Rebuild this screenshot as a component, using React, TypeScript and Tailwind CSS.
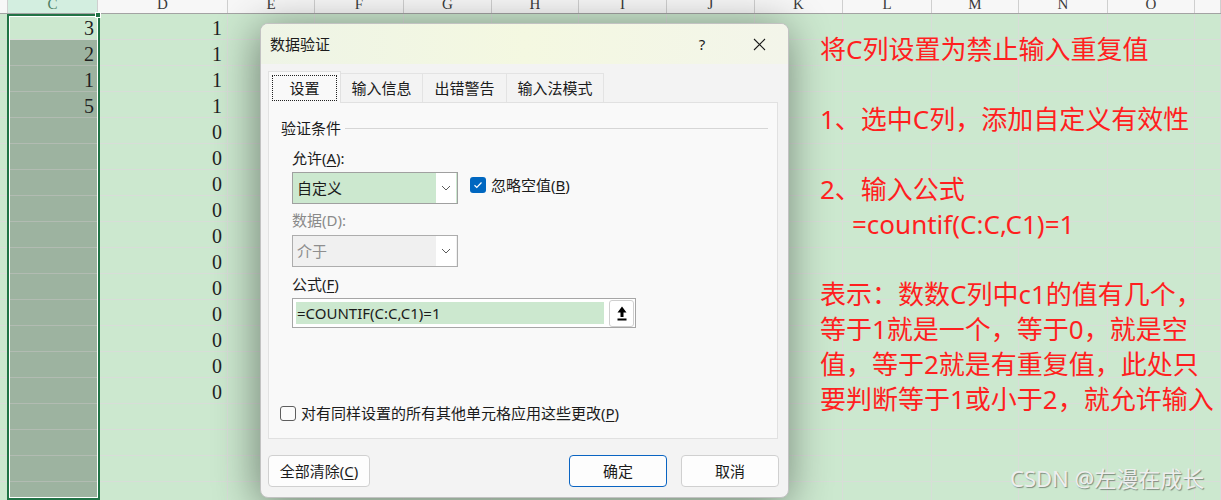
import React from "react";

const COLS = [
  { id: "B", w: "w-[8px]" },
  { id: "C", w: "w-[90px]" },
  { id: "D", w: "w-[130px]" },
  { id: "E", w: "w-[87px]" },
  { id: "F", w: "w-[89px]" },
  { id: "G", w: "w-[88px]" },
  { id: "H", w: "w-[87px]" },
  { id: "I", w: "w-[88px]" },
  { id: "J", w: "w-[88px]" },
  { id: "K", w: "w-[88px]" },
  { id: "L", w: "w-[89px]" },
  { id: "M", w: "w-[87px]" },
  { id: "N", w: "w-[89px]" },
  { id: "O", w: "w-[87px]" },
  { id: "P", w: "w-[26px]" },
];

const ROWS = Array.from({ length: 19 }, (_, i) => i + 1);
const C_VALUES: Record<number, number> = { 1: 3, 2: 2, 3: 1, 4: 5 };

const cellValue = (col: string, row: number) => {
  if (col === "C") return C_VALUES[row] ?? "";
  if (col === "D") {
    if (row <= 4) return 1;
    if (row <= 15) return 0;
  }
  return "";
};

const NOTES = [
  "将C列设置为禁止输入重复值",
  "",
  "1、选中C列，添加自定义有效性",
  "",
  "2、输入公式",
  "=countif(C:C,C1)=1",
  "",
  "表示：数数C列中c1的值有几个，",
  "等于1就是一个，等于0，就是空",
  "值，等于2就是有重复值，此处只",
  "要判断等于1或小于2，就允许输入",
];

const Chevron = () => (
  <svg width="10" height="6" viewBox="0 0 10 6" fill="none">
    <path d="M1 1l4 4 4-4" stroke="#5a5a5a" strokeWidth="1" />
  </svg>
);

const Sheet = () => (
  <div className="flex flex-col">
    {/* column headers, top half cut off by the screenshot */}
    <div className="flex h-[14px] border-b border-[#a3a3a3] bg-[#f7f7f7] overflow-hidden">
      {COLS.map((c) => (
        <div
          key={c.id}
          className={`${c.w} shrink-0 border-r border-[#cfcfcf] flex justify-center font-['Liberation_Serif',serif] text-[15px] leading-[14px] ${
            c.id === "C" ? "bg-[#d3eee0] text-[#4d7e63]" : "text-[#3a3a3a]"
          }`}
        >
          <span className="-translate-y-[3px]">{c.id === "B" || c.id === "P" ? "" : c.id}</span>
        </div>
      ))}
    </div>

    {ROWS.map((r) => (
      <div key={r} className="flex h-[26px]">
        {COLS.map((c) => {
          const selected = c.id === "C" && r > 1;
          return (
            <div
              key={c.id}
              className={`${c.w} shrink-0 border-r border-b flex items-center justify-end pt-[3px] font-['Liberation_Serif',serif] text-[20px] text-[#1f1f1f] ${
                selected ? "bg-[#9db3a0] border-[#b2bbb2]" : "border-[#d8ddd8]"
              } ${c.id === "C" ? "pr-[3px]" : "pr-[5px]"}`}
            >
              {cellValue(c.id, r)}
            </div>
          );
        })}
      </div>
    ))}
  </div>
);

const Dialog = () => (
  <div className="absolute left-[260px] top-[23px] w-[529px] h-[475px] rounded-[8px] border border-[#c2c2c2] bg-[#f3f3f3] shadow-[-2px_6px_44px_rgba(0,0,0,0.45)] overflow-hidden flex flex-col font-['Noto_Sans','Noto_Sans_CJK_SC',sans-serif] text-[15px] text-[#1b1b1b]">
    {/* title bar */}
    <div className="h-[40px] shrink-0 flex items-center pl-[9px] bg-gradient-to-r from-[#eef4e6] via-[#f4f8e1] to-[#f3f5ea]">
      <span>数据验证</span>
      <span className="ml-auto w-[40px] text-center">?</span>
      <span className="ml-[17px] mr-[9px] w-[40px] flex justify-center">
        <svg width="13" height="13" viewBox="0 0 13 13" fill="none">
          <path d="M1 1l11 11M12 1L1 12" stroke="#1b1b1b" strokeWidth="1.1" />
        </svg>
      </span>
    </div>

    <div className="flex-1 flex flex-col pl-[7px] pr-[10px]">
      {/* tabs */}
      <div className="mt-[7px] h-[31px] flex items-end">
        <div className="relative z-10 -mb-px w-[73px] h-[32px] border border-b-0 border-[#e1e1e1] bg-[#f9f9f9] p-[3px] pb-[2px]">
          <div className="h-full border border-dotted border-[#222] flex items-center justify-center">设置</div>
        </div>
        <div className="w-[82px] h-[29px] border border-l-0 border-b-0 border-[#e3e3e3] flex items-center justify-center">输入信息</div>
        <div className="w-[84px] h-[29px] border border-l-0 border-b-0 border-[#e3e3e3] flex items-center justify-center">出错警告</div>
        <div className="w-[97px] h-[29px] border border-l-0 border-b-0 border-[#e3e3e3] flex items-center justify-center">输入法模式</div>
      </div>

      {/* tab panel */}
      <div className="h-[337px] border border-[#e1e1e1] bg-[#f9f9f9] flex flex-col">
        <div className="mt-[15px] h-[20px] flex items-center pl-[12px] pr-[9px]">
          <span className="leading-[20px]">验证条件</span>
          <div className="ml-[4px] flex-1 h-px bg-[#d6d6d6]" />
        </div>

        <div className="pl-[23px] flex flex-col">
          <div className="mt-[10px] h-[20px] leading-[20px]">
            允许(<span className="underline underline-offset-2">A</span>):
          </div>
          <div className="mt-[4px] h-[32px] flex">
            <div className="w-[166px] h-[32px] border border-[#a0a0a0] bg-[#cce8cf] flex items-center">
              <span className="pl-[4px]">自定义</span>
              <div className="ml-auto mr-px w-[20px] h-[30px] bg-white flex items-center justify-center">
                <Chevron />
              </div>
            </div>
            <div className="ml-[12px] mt-[5px] h-[16px] flex items-center gap-[5px]">
              <div className="w-[16px] h-[16px] rounded-[3px] bg-[#0067c0] flex items-center justify-center">
                <svg width="12" height="12" viewBox="0 0 12 12" fill="none">
                  <path d="M2.5 6.3l2.3 2.2 4.7-5" stroke="#fff" strokeWidth="1.2" />
                </svg>
              </div>
              <span className="leading-[16px]">
                忽略空值(<span className="underline underline-offset-2">B</span>)
              </span>
            </div>
          </div>

          <div className="mt-[6px] h-[20px] leading-[20px] text-[#8a8a8a]">数据(D):</div>
          <div className="mt-[5px] w-[166px] h-[32px] border border-[#adadad] bg-[#f0f0f0] flex items-center">
            <span className="pl-[4px] text-[#8e8e8e]">介于</span>
            <div className="ml-auto mr-px w-[20px] h-[30px] bg-white flex items-center justify-center">
              <Chevron />
            </div>
          </div>

          <div className="mt-[7px] h-[20px] leading-[20px]">
            公式(<span className="underline underline-offset-2">F</span>)
          </div>
          <div className="mt-[4px] w-[344px] h-[30px] border border-[#a6a6a6] bg-white flex items-center">
            <div className="ml-[3px] w-[308px] h-[22px] bg-[#cce8cf] flex items-center pl-px">=COUNTIF(C:C,C1)=1</div>
            <div className="ml-[5px] w-[25px] h-[27px] rounded-[3px] border border-[#cfcfcf] bg-white flex items-center justify-center">
              <svg width="10" height="15" viewBox="0 0 10 15">
                <path d="M5 0.5L9.5 6.5H6.5V11H3.5V6.5H0.5Z" fill="#000" />
                <rect x="0.5" y="12.5" width="9" height="2" fill="#000" />
              </svg>
            </div>
          </div>
        </div>

        <div className="mt-[75px] h-[20px] pl-[11px] flex items-center gap-[5px]">
          <div className="w-[16px] h-[15px] rounded-[3px] border border-[#5e5e5e] bg-[#fbfbfb]" />
          <span className="leading-[20px]">
            对有同样设置的所有其他单元格应用这些更改(<span className="underline underline-offset-2">P</span>)
          </span>
        </div>
      </div>

      {/* buttons */}
      <div className="mt-[16px] flex -mr-px">
        <button className="w-[102px] h-[32px] rounded-[4px] border border-[#d0d0d0] bg-[#fdfdfd]">
          全部清除(<span className="underline underline-offset-2">C</span>)
        </button>
        <button className="ml-auto w-[98px] h-[32px] rounded-[4px] border border-[#0a64c2] bg-[#fdfdfd]">确定</button>
        <button className="ml-[14px] w-[98px] h-[32px] rounded-[4px] border border-[#d0d0d0] bg-[#fdfdfd]">取消</button>
      </div>
    </div>
  </div>
);

export default function App() {
  return (
    <div className="relative w-[1221px] h-[500px] overflow-hidden bg-[#cce8cf]">
      <Sheet />

      {/* selection frame around column C */}
      <div className="absolute left-[7px] top-[14px] w-[93px] bottom-0 border-2 border-[#217346] shadow-[inset_0_0_0_1px_#ffffff]" />
      <div className="absolute left-[95px] top-[12px] w-[6px] h-[6px] bg-[#217346] border border-white" />

      <Dialog />

      {/* note text box */}
      <div className="absolute left-[820px] top-[32px] font-['Noto_Sans','Noto_Sans_CJK_SC',sans-serif] text-[26px] leading-[35px] text-[#ff1f1f] whitespace-pre">
        {NOTES.map((line, i) => (
          <div key={i} className={`h-[35px] ${line.startsWith("=") ? "pl-[32px]" : ""}`}>
            {line}
          </div>
        ))}
      </div>

      {/* watermark */}
      <div className="absolute left-[1010px] top-[465px] font-['Noto_Sans','Noto_Sans_CJK_SC',sans-serif] text-[22px] leading-[26px] text-[#eeeeee] [text-shadow:1px_1px_1px_rgba(0,0,0,0.4)]">
        CSDN @左漫在成长
      </div>
    </div>
  );
}
